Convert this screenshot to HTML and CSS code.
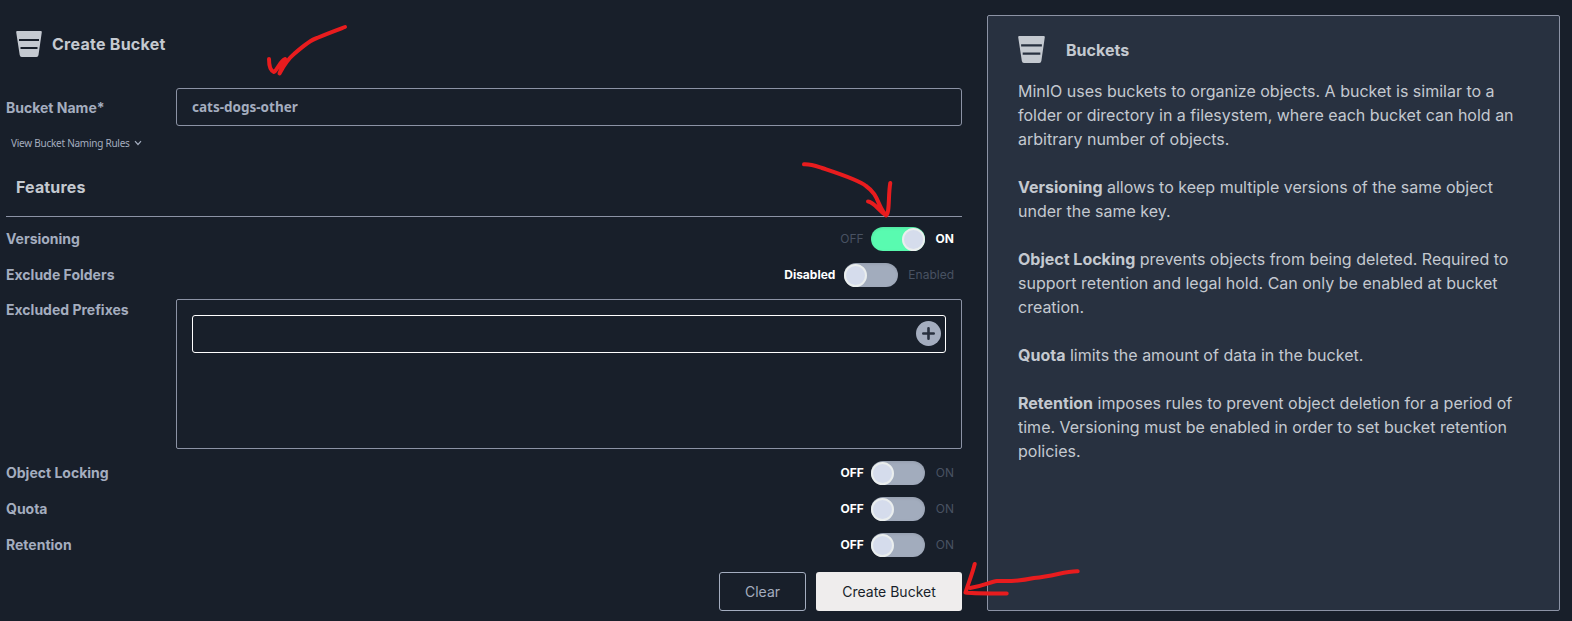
FILE: index.html
```html
<!DOCTYPE html>
<html lang="en">
<head>
<meta charset="utf-8">
<title>Create Bucket</title>
<link rel="stylesheet" href="styles.css">
</head>
<body>
<main class="page">
  <form class="form">
    <header class="form-title">
      <svg class="bucket" viewBox="0 0 27 27"><path fill="currentColor" fill-rule="evenodd" d="M1.200 0h23.600q1.200 0 1 1.200L22.500 24.100q-.3 1.900-2 1.900H5.700q-1.700 0-2-1.900L.2 1.200Q0 0 1.200 0ZM3 8v2h20V8ZM4.500 16v2h17v-2Z"/></svg>
      <h1>Create Bucket</h1>
    </header>
    <div class="row name-row">
      <label class="label" for="name">Bucket Name*</label>
      <input id="name" class="input" type="text" value="cats-dogs-other">
    </div>
    <div class="rules"><span>View Bucket Naming Rules</span>
      <svg class="chevron" viewBox="0 0 8 6"><path d="M1 1.200 4 4.500 7 1.200" fill="none" stroke="currentColor" stroke-width="1.200"/></svg>
    </div>
    <h2 class="features">Features</h2>
    <div class="row switch-row first"><span class="label">Versioning</span>
      <div class="control"><span class="opt">OFF</span><i class="switch on"></i><span class="opt active">ON</span></div></div>
    <div class="row switch-row"><span class="label">Exclude Folders</span>
      <div class="control wide"><span class="opt active">Disabled</span><i class="switch"></i><span class="opt">Enabled</span></div></div>
    <div class="row prefix-row"><span class="label">Excluded Prefixes</span>
      <div class="prefixes"><div class="prefix-input">
        <svg class="plus" viewBox="0 0 25 25"><circle cx="12.500" cy="12.500" r="12.500" fill="#a4adbf"/><path d="M12.500 7.300v10.400M7.300 12.500h10.400" stroke="#28303f" stroke-width="2.600" stroke-linecap="round"/></svg>
      </div></div></div>
    <div class="row switch-row"><span class="label">Object Locking</span>
      <div class="control"><span class="opt active">OFF</span><i class="switch"></i><span class="opt">ON</span></div></div>
    <div class="row switch-row"><span class="label">Quota</span>
      <div class="control"><span class="opt active">OFF</span><i class="switch"></i><span class="opt">ON</span></div></div>
    <div class="row switch-row"><span class="label">Retention</span>
      <div class="control"><span class="opt active">OFF</span><i class="switch"></i><span class="opt">ON</span></div></div>
    <div class="actions">
      <button class="btn clear" type="button">Clear</button>
      <button class="btn create" type="button">Create Bucket</button>
    </div>
  </form>
  <aside class="help">
    <header class="help-title">
      <svg class="bucket" viewBox="0 0 26 26"><path fill="currentColor" fill-rule="evenodd" d="M1.200 0h23.600q1.200 0 1 1.200L22.500 24.100q-.3 1.900-2 1.900H5.700q-1.700 0-2-1.900L.2 1.200Q0 0 1.200 0ZM3 8v2h20V8ZM4.500 16v2h17v-2Z"/></svg>
      <h2>Buckets</h2>
    </header>
    <p>MinIO uses buckets to organize objects. A bucket is similar to a<br>folder or directory in a filesystem, where each bucket can hold an<br>arbitrary number of objects.</p>
    <p><b>Versioning</b> allows to keep multiple versions of the same object<br>under the same key.</p>
    <p><b>Object Locking</b> prevents objects from being deleted. Required to<br>support retention and legal hold. Can only be enabled at bucket<br>creation.</p>
    <p><b>Quota</b> limits the amount of data in the bucket.</p>
    <p><b>Retention</b> imposes rules to prevent object deletion for a period of<br>time. Versioning must be enabled in order to set bucket retention<br>policies.</p>
  </aside>
</main>
<svg class="marks" viewBox="0 0 1572 621">
  <path d="M269 59C269 66 271 71 274 72C278 69 280 61 285 59C285 62 282 67 279.500 73.500C284 65 288 59 294 54C302 47 310 40 317 38C326 34 337 30 345 27"/>
  <path d="M804 164.300C811 164 816 166 822 168C840 174 859 180 866 186C879 195 877 205 886 215.500C890 213 888 195 890.300 183M868 201.500C874 202 879 211 886 215"/>
  <path d="M1077.700 571.300C1065 571 1055 576 1034 578C1015 582 1010 581 997 581C990 582 984 586 970 588M974.700 564C972 575 968 584 965.500 592.500C972 593.500 983 593.300 1006.700 593.500"/>
</svg>
</body>
</html>
```
FILE: styles.css
```css
* { box-sizing: border-box; }
body { margin: 0; background: #181f2a; color: #c4c9d0; font-family: Inter, "Liberation Sans", sans-serif; }
h1, h2, p { margin: 0; }
.page { display: flex; gap: 25px; height: 621px; padding: 15px 12px 10px 6px; overflow: hidden; }
.form { width: 956px; display: flex; flex-direction: column; }
.bucket { width: 27px; height: 27px; flex: none; display: block; }
.form-title { display: flex; align-items: center; gap: 9px; height: 58px; padding-left: 10px; margin-bottom: 15px; }
h1, h2 { font-size: 16px; font-weight: 700; line-height: 24px; }
h1 { letter-spacing: .26px; }
.row { display: flex; }
.name-row { height: 38px; align-items: center; }
.label { width: 170px; flex: none; color: #a4adbf; font-size: 14px; font-weight: 700; line-height: 20px; }
.name-row .label { padding-top: 1px; }
.input { flex: 1; height: 38px; border: 1px solid #8c93a5; border-radius: 3px; background: none; padding: 0 15px; color: #a4adbf; font: 700 13.5px "Noto Sans", sans-serif; outline: 0; }
.rules { display: flex; align-items: center; gap: 4px; height: 16px; margin: 9px 0 0 5px; color: #a4adbf; font: 10px/16px "Noto Sans", sans-serif; letter-spacing: -.25px; }
.chevron { width: 8px; height: 6px; }
.features { height: 66px; padding: 24px 10px 0; border-bottom: 1px solid #8c93a5; letter-spacing: .15px; }
.switch-row { height: 36px; align-items: center; justify-content: space-between; }
.switch-row.first { margin-top: 4px; }
.control { display: flex; align-items: center; padding-right: 8px; font-size: 12px; color: #485262; }
.opt { padding-bottom: 1px; }
.opt.active { color: #fff; font-weight: 700; }
.switch { width: 54px; height: 24px; margin: 0 11px 0 7px; border-radius: 12px; background: #a2acbd; box-shadow: inset 0 1px 3px rgba(0, 0, 0, .1); display: flex; align-items: center; }
.wide .switch { margin: 0 10px 0 9px; }
.switch::before { content: ""; box-sizing: border-box; width: 23px; height: 23px; border: 2px solid #eaeeee; border-radius: 50%; background: #d5dcec; }
.switch.on { background: #59fbb0; justify-content: flex-end; }
.prefix-row { height: 150px; margin: 6px 0; }
.prefix-row .label { padding-top: 1px; }
.prefixes { flex: 1; border: 1px solid #8c93a5; border-radius: 2px; padding: 15px; }
.prefix-input { display: flex; align-items: center; justify-content: flex-end; height: 38px; border: 1px solid #fff; border-radius: 3px; padding: 0 4px 1px 0; }
.plus { width: 25px; height: 25px; }
.actions { display: flex; justify-content: flex-end; gap: 10px; margin-top: 9px; }
.btn { height: 39px; padding: 0; border-radius: 3px; font: 14px Inter, sans-serif; }
.clear { width: 87px; border: 1px solid #a4adbf; background: none; color: #a4adbf; }
.create { width: 146px; border: 0; background: #efeded; color: #181f2a; }
.help { width: 573px; height: 596px; border: 1px solid #8c93a5; border-radius: 2px; background: #283140; padding: 19px 30px; font-size: 16px; line-height: 24px; }
.help-title { display: flex; align-items: center; gap: 21px; height: 30px; margin-bottom: 14px; }
.help-title .bucket { margin-bottom: 1px; }
.help p { margin-bottom: 24px; white-space: nowrap; }
.marks { position: absolute; left: 0; top: 0; width: 1572px; height: 621px; fill: none; stroke: #e81c1e; stroke-width: 4; stroke-linecap: round; stroke-linejoin: round; pointer-events: none; }
```
